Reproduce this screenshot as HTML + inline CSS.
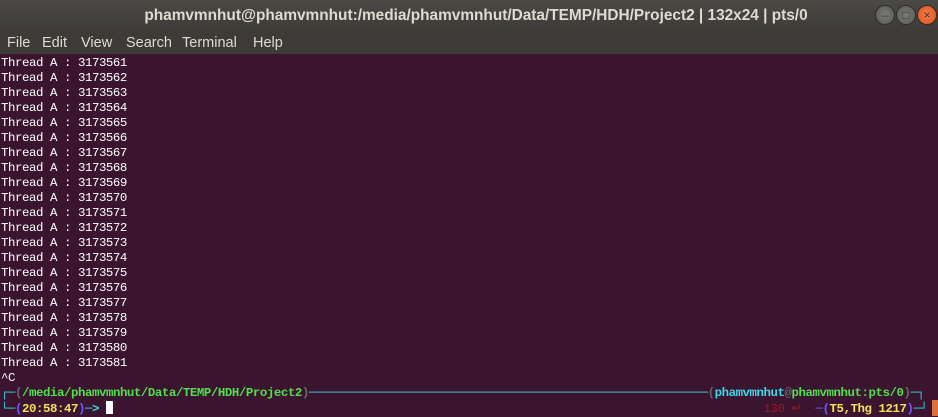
<!DOCTYPE html>
<html><head><meta charset="utf-8"><style>
body{margin:0;width:938px;height:416px;overflow:hidden;background:#3b1530;font-family:"Liberation Sans",sans-serif;position:relative}
#title{position:absolute;left:0;top:0;width:938px;height:32px;background:linear-gradient(#4a4945,#3c3b37);color:#dfdbd2;font-weight:bold;font-size:15.4px;text-align:center;line-height:32px;text-indent:14px;white-space:nowrap}
#menu{position:absolute;left:0;top:32px;width:938px;height:22px;background:#3c3b37;color:#dfdbd2;font-size:14.5px;line-height:22px}
#menu span{position:absolute;top:0}
.btn{position:absolute;top:5px;width:18px;height:18px;border-radius:50%;background:radial-gradient(#7a7a76,#5a5955);border:1px solid #2e2d2a;color:#3c3b37;font-size:12px;line-height:18px;text-align:center}
pre{position:absolute;left:1px;top:56px;margin:0;font-family:"Liberation Mono",monospace;font-size:12.4px;letter-spacing:-0.44px;line-height:15px;color:#fff}
.p{font-weight:bold}
.c{color:#3fd8e8}.g{color:#666}.gr{color:#4fe04a}.y{color:#f2e05a}.b{color:#6a5cff}.r{color:#a01818}
#cur{display:inline-block;width:7px;height:13px;background:#fff;vertical-align:-2px}
</style></head><body>
<div id="title">phamvmnhut@phamvmnhut:/media/phamvmnhut/Data/TEMP/HDH/Project2 | 132x24 | pts/0</div>
<div class="btn" style="left:875px">–</div>
<div class="btn" style="left:896px">□</div>
<div class="btn" style="left:917px;background:radial-gradient(#f47a4a,#e0531d);color:#3c3b37">×</div>
<div id="menu"><span style="left:7px">File</span><span style="left:42px">Edit</span><span style="left:81px">View</span><span style="left:126px">Search</span><span style="left:182px">Terminal</span><span style="left:253px">Help</span></div>
<pre>Thread A : 3173561
Thread A : 3173562
Thread A : 3173563
Thread A : 3173564
Thread A : 3173565
Thread A : 3173566
Thread A : 3173567
Thread A : 3173568
Thread A : 3173569
Thread A : 3173570
Thread A : 3173571
Thread A : 3173572
Thread A : 3173573
Thread A : 3173574
Thread A : 3173575
Thread A : 3173576
Thread A : 3173577
Thread A : 3173578
Thread A : 3173579
Thread A : 3173580
Thread A : 3173581
^C
<span class="p"><span class="c">┌─</span><span class="g">(</span><span class="gr">/media/phamvmnhut/Data/TEMP/HDH/Project2</span><span class="g">)</span><span class="c">─────────────────────────────────────────────────────────</span><span class="g">(</span><span class="c">phamvmnhut</span><span class="g">@</span><span class="gr">phamvmnhut:pts/0</span><span class="g">)</span><span class="c">─┐</span></span>
<span class="p"><span class="c">└─</span><span class="b">(</span><span class="y">20:58:47</span><span class="b">)</span><span class="c">─&gt;</span> <span id="cur"></span>                                                                                             <span class="r" style="font-weight:normal">130 ↵</span>  <span class="b">─(</span><span class="y">T5,Thg 1217</span><span class="b">)</span><span class="c">─┘</span></span></pre>
<div style="position:absolute;left:932px;top:400px;width:6px;height:16px;background:#e0703a"></div>
</body></html>
